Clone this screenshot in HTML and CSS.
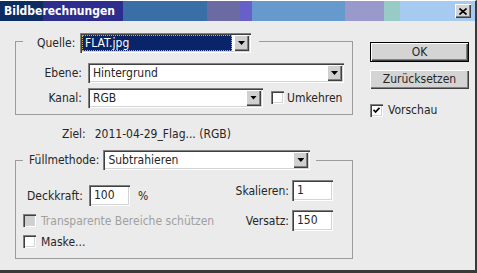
FILE: index.html
```html
<!DOCTYPE html>
<html lang="de">
<head>
<meta charset="utf-8">
<title>Bildberechnungen</title>
<link rel="stylesheet" href="styles.css">
</head>
<body>
<div class="window">
  <div class="titlebar">
    <span class="title">Bildberechnungen</span>
    <span class="close"><svg width="8" height="7" viewBox="0 0 8 7"><path d="M0.5 0.5 L7.5 6.5 M7.5 0.5 L0.5 6.5" stroke="#000" stroke-width="1.6" fill="none"/></svg></span>
  </div>
  <div class="content">
    <div class="main">
      <fieldset class="group g1">
        <legend class="legend legend-src">
          <span class="lbl">Quelle:</span>
          <div class="combo sel w-src"><span class="val">FLAT.jpg</span><span class="arrow"></span></div>
        </legend>
        <div class="rows">
          <span class="rlbl">Ebene:</span>
          <div class="combo w-ebene"><span class="val">Hintergrund</span><span class="arrow"></span></div>
          <span class="rlbl">Kanal:</span>
          <div class="inline">
            <div class="combo w-kanal"><span class="val">RGB</span><span class="arrow"></span></div>
            <label class="check check-inv"><span class="cb"></span><span>Umkehren</span></label>
          </div>
        </div>
      </fieldset>
      <div class="target"><span>Ziel:</span><span>2011-04-29_Flag... (RGB)</span></div>
      <fieldset class="group g2">
        <legend class="legend legend-fill">
          <span class="lbl">Füllmethode:</span>
          <div class="combo w-fill"><span class="val">Subtrahieren</span><span class="arrow"></span></div>
        </legend>
        <div class="g2-body">
          <div class="g2-left">
            <div class="opacity">
              <span>Deckkraft:</span>
              <span class="field">100</span>
              <span>%</span>
            </div>
            <label class="check disabled"><span class="cb"></span><span>Transparente Bereiche schützen</span></label>
            <label class="check"><span class="cb"></span><span>Maske...</span></label>
          </div>
          <div class="g2-right">
            <div class="num"><span>Skalieren:</span><span class="field">1</span></div>
            <div class="num"><span>Versatz:</span><span class="field">150</span></div>
          </div>
        </div>
      </fieldset>
    </div>
    <div class="side">
      <div class="button default">OK</div>
      <div class="button">Zurücksetzen</div>
      <label class="check preview"><span class="cb checked"><svg width="7" height="7" viewBox="0 0 7 7"><path d="M0.5 2.8 L2.6 5 L6.5 0.8" stroke="#000" stroke-width="1.8" fill="none"/></svg></span><span>Vorschau</span></label>
    </div>
  </div>
</div>
</body>
</html>
```

FILE: styles.css
```css
* { box-sizing: border-box; }
html, body { margin: 0; padding: 0; }
body {
  width: 477px;
  height: 273px;
  overflow: hidden;
  background: #ebebeb;
  font-family: "DejaVu Sans Condensed", "DejaVu Sans", sans-serif;
  font-stretch: semi-condensed;
  font-size: 12px;
  color: #262626;
}

.window {
  height: 273px;
  display: flex;
  flex-direction: column;
  background: #ebebeb;
  border-top: 1px solid #ffffff;
  border-right: 2px solid #3a3a3a;
  border-bottom: 3px solid #3a3a3a;
}

.titlebar {
  height: 20px;
  flex: none;
  display: flex;
  align-items: center;
  justify-content: space-between;
  padding: 0 4px 0 4px;
  color: #ffffff;
  font-weight: bold;
  font-size: 12px;
  background: linear-gradient(to right,
    #0d2c60 0 43px,
    #2c2d8c 43px 123px,
    #3a6ea6 123px 207px,
    #6c6aa2 207px 240px,
    #6660c8 240px 252px,
    #6699cc 252px 345px,
    #9a99cc 345px 384px,
    #98cac6 384px 400px,
    #a6caf0 400px);
}

.close {
  width: 16px;
  height: 14px;
  display: flex;
  align-items: center;
  justify-content: center;
  background: #d4d4d4;
  box-shadow: inset 1px 1px #ffffff, inset -1px -1px #404040, inset -2px -2px #808080;
}

.content {
  flex: 1;
  display: flex;
  padding-left: 15px;
}

.main { width: 338px; }

.group {
  margin: 0;
  border: 1px solid #9c9c9c;
  min-width: 0;
}

.legend {
  display: flex;
  align-items: center;
  margin-left: 7px;
}

.g1 {
  margin-top: 8px;
  padding: 10px 0 6px 0;
}
.legend-src { padding: 4px 8px 0 14px; }
.legend-src .lbl { width: 43px; }

.rows {
  display: grid;
  grid-template-columns: 66px auto;
  column-gap: 6px;
  row-gap: 4px;
  align-items: center;
}
.rlbl { text-align: right; }

.inline { display: flex; align-items: center; }

/* combo boxes */
.combo {
  height: 20px;
  display: flex;
  background: #ffffff;
  padding: 2px;
  box-shadow: inset 1px 1px #808080, inset 2px 2px #404040, inset -1px -1px #ffffff, inset -2px -2px #d4d4d4;
}
.combo .val {
  flex: 1;
  padding-left: 3px;
  line-height: 16px;
  white-space: nowrap;
  overflow: hidden;
}
.combo .arrow {
  width: 15px;
  position: relative;
  background: #d0d0d0;
  box-shadow: inset 1px 1px #ffffff, inset -1px -1px #404040, inset -2px -2px #808080;
}
.combo .arrow::after {
  content: "";
  position: absolute;
  left: 4px;
  top: 6px;
  width: 7px;
  height: 4px;
  background: #000;
  clip-path: polygon(0 0, 100% 0, 50% 100%);
}
.sel .val {
  background: #0a246a;
  color: #ffffff;
  margin-right: 2px;
  outline: 1px dotted #c8b16c;
  outline-offset: -1px;
}
.w-src { width: 171px; }
.w-ebene { width: 256px; }
.w-kanal { width: 175px; }
.w-fill { width: 207px; }

.target {
  margin-top: 12px;
  height: 15px;
  line-height: 15px;
  padding-left: 47px;
  display: flex;
  gap: 9px;
}

.g2 {
  margin-top: 8px;
  padding: 0 19px 6px 0;
}
.legend-fill { padding: 0 6px 0 6px; gap: 4px; }

.g2-body {
  display: flex;
  justify-content: space-between;
}
.g2-left {
  padding: 15px 0 0 7px;
  display: flex;
  flex-direction: column;
}
.opacity {
  display: flex;
  align-items: center;
  height: 21px;
  margin-left: 4px;
  margin-bottom: 4px;
}
.opacity .field { margin: 0 8px 0 6px; }

.g2-right {
  padding-top: 10px;
  display: flex;
  flex-direction: column;
  gap: 9px;
}
.num {
  display: flex;
  align-items: center;
  justify-content: flex-end;
  gap: 3px;
}

.field {
  width: 41px;
  height: 21px;
  line-height: 21px;
  padding-left: 5px;
  background: #ffffff;
  box-shadow: inset 1px 1px #808080, inset 2px 2px #404040, inset -1px -1px #ffffff, inset -2px -2px #d4d4d4;
}

/* checkboxes */
.check {
  display: flex;
  align-items: center;
  height: 21px;
  gap: 5px;
}
.cb {
  width: 13px;
  height: 13px;
  flex: none;
  display: flex;
  align-items: center;
  justify-content: center;
  background: #ffffff;
  box-shadow: inset 1px 1px #808080, inset 2px 2px #404040, inset -1px -1px #ffffff, inset -2px -2px #d4d4d4;
}
.check-inv { margin-left: 8px; gap: 3px; }
.disabled { color: #a0a0a0; }
.disabled .cb { background: #cfcfcf; }

/* right side */
.side {
  width: 99px;
  margin-left: 17px;
  padding-top: 21px;
  display: flex;
  flex-direction: column;
}
.button {
  height: 19px;
  line-height: 19px;
  text-align: center;
  background: #d4d4d4;
  box-shadow: inset 1px 1px #ffffff, inset -1px -1px #404040, inset -2px -2px #808080;
}
.button.default {
  height: 20px;
  line-height: 18px;
  border: 1px solid #000000;
  margin-bottom: 8px;
}
.preview { margin-top: 11px; height: 20px; gap: 5px; }
```
